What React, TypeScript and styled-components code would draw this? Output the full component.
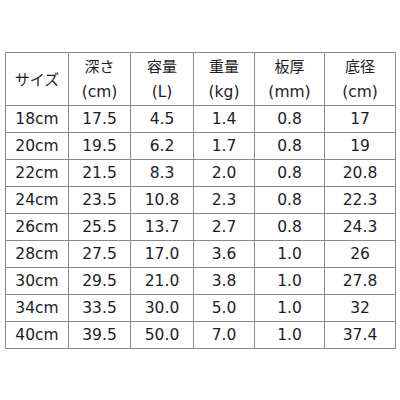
import styled, { createGlobalStyle } from 'styled-components';

const GlobalStyle = createGlobalStyle`
  html, body {
    margin: 0;
    padding: 0;
    background: #ffffff;
  }
`;

const Page = styled.div`
  width: 400px;
  height: 400px;
  padding: 52px 0 0 5px;
  box-sizing: border-box;
`;

const SizeTable = styled.table`
  border-collapse: collapse;
  table-layout: fixed;
  width: 390px;
  font-family: "DejaVu Sans", "Noto Sans CJK JP", sans-serif;
  font-size: 15.5px;
  color: #1c1c28;
`;

const HeadCell = styled.th`
  border: 1px solid #8a8a8a;
  height: 50px;
  padding: 0;
  font-weight: normal;
  text-align: center;
  vertical-align: middle;
  line-height: 25px;
`;

const JpLabel = styled.span`
  font-family: "Noto Sans CJK JP", sans-serif;
  font-size: 15px;
`;

const Cell = styled.td`
  border: 1px solid #8a8a8a;
  height: 26px;
  padding: 0;
  text-align: center;
  vertical-align: middle;
  line-height: 26px;
`;

const columns = [
  { label: 'サイズ', unit: null, width: 63 },
  { label: '深さ', unit: '(cm)', width: 62 },
  { label: '容量', unit: '(L)', width: 63 },
  { label: '重量', unit: '(kg)', width: 61 },
  { label: '板厚', unit: '(mm)', width: 70 },
  { label: '底径', unit: '(cm)', width: 71 },
];

const rows = [
  ['18cm', '17.5', '4.5', '1.4', '0.8', '17'],
  ['20cm', '19.5', '6.2', '1.7', '0.8', '19'],
  ['22cm', '21.5', '8.3', '2.0', '0.8', '20.8'],
  ['24cm', '23.5', '10.8', '2.3', '0.8', '22.3'],
  ['26cm', '25.5', '13.7', '2.7', '0.8', '24.3'],
  ['28cm', '27.5', '17.0', '3.6', '1.0', '26'],
  ['30cm', '29.5', '21.0', '3.8', '1.0', '27.8'],
  ['34cm', '33.5', '30.0', '5.0', '1.0', '32'],
  ['40cm', '39.5', '50.0', '7.0', '1.0', '37.4'],
];

export default function App() {
  return (
    <>
      <GlobalStyle />
      <Page>
        <SizeTable>
          <colgroup>
            {columns.map((c) => (
              <col key={c.label} style={{ width: c.width }} />
            ))}
          </colgroup>
          <thead>
            <tr>
              {columns.map((c) => (
                <HeadCell key={c.label}>
                  <JpLabel>{c.label}</JpLabel>
                  {c.unit && (
                    <>
                      <br />
                      {c.unit}
                    </>
                  )}
                </HeadCell>
              ))}
            </tr>
          </thead>
          <tbody>
            {rows.map((r) => (
              <tr key={r[0]}>
                {r.map((v, i) => (
                  <Cell key={i}>{v}</Cell>
                ))}
              </tr>
            ))}
          </tbody>
        </SizeTable>
      </Page>
    </>
  );
}
